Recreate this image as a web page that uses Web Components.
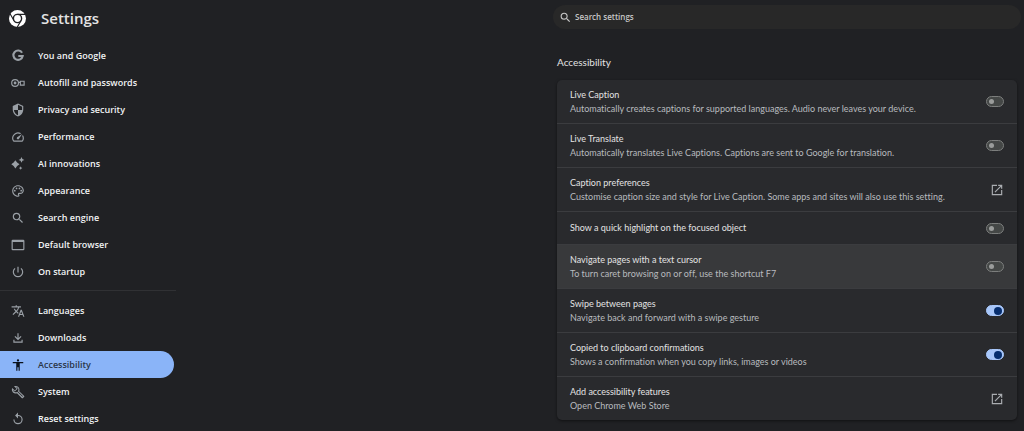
<!DOCTYPE html>
<html lang="en-GB">
<head>
<meta charset="utf-8">
<title>Settings - Accessibility</title>
<style>
  html { background: #202124; }
  body { margin: 0; background: #202124; color: #e3e3e3; font-family: "Open Sans", "Noto Sans", sans-serif; }
</style>
</head>
<body>
<settings-app>
  <settings-brand slot="side">Settings</settings-brand>
  <settings-nav slot="side">
    <nav-item icon="google">You and Google</nav-item>
    <nav-item icon="key">Autofill and passwords</nav-item>
    <nav-item icon="shield">Privacy and security</nav-item>
    <nav-item icon="speed">Performance</nav-item>
    <nav-item icon="sparkle">AI innovations</nav-item>
    <nav-item icon="palette">Appearance</nav-item>
    <nav-item icon="search">Search engine</nav-item>
    <nav-item icon="window">Default browser</nav-item>
    <nav-item icon="power">On startup</nav-item>
    <nav-divider></nav-divider>
    <nav-item icon="translate">Languages</nav-item>
    <nav-item icon="download">Downloads</nav-item>
    <nav-item icon="person" selected>Accessibility</nav-item>
    <nav-item icon="wrench">System</nav-item>
    <nav-item icon="reset">Reset settings</nav-item>
  </settings-nav>
  <search-box label="Search settings"></search-box>
  <settings-card heading="Accessibility">
    <setting-row kind="toggle"><span slot="title">Live Caption</span><span slot="note">Automatically creates captions for supported languages. Audio never leaves your device.</span></setting-row>
    <setting-row kind="toggle"><span slot="title">Live Translate</span><span slot="note">Automatically translates Live Captions. Captions are sent to Google for translation.</span></setting-row>
    <setting-row kind="link"><span slot="title">Caption preferences</span><span slot="note">Customise caption size and style for Live Caption. Some apps and sites will also use this setting.</span></setting-row>
    <setting-row kind="toggle" single><span slot="title">Show a quick highlight on the focused object</span></setting-row>
    <setting-row kind="toggle" active><span slot="title">Navigate pages with a text cursor</span><span slot="note">To turn caret browsing on or off, use the shortcut F7</span></setting-row>
    <setting-row kind="toggle" on><span slot="title">Swipe between pages</span><span slot="note">Navigate back and forward with a swipe gesture</span></setting-row>
    <setting-row kind="toggle" on><span slot="title">Copied to clipboard confirmations</span><span slot="note">Shows a confirmation when you copy links, images or videos</span></setting-row>
    <setting-row kind="link"><span slot="title">Add accessibility features</span><span slot="note">Open Chrome Web Store</span></setting-row>
  </settings-card>
</settings-app>

<script>
const ICONS = {
  google: '<path d="M19 6.500A8 8 0 1 0 20 12H12.500" fill="none" stroke="currentColor" stroke-width="3.600"/>',
  key: '<g fill="none" stroke="currentColor" stroke-width="2"><circle cx="7" cy="12" r="5.800"/><path d="M12.800 11H16M16 9h6.500v6.500H16z"/></g><circle cx="7" cy="12" r="2.400"/>',
  shield: '<path transform="matrix(-1 0 0 1 24 0)" d="M12 1L3 5v6c0 5.550 3.840 10.740 9 12 5.160-1.260 9-6.450 9-12V5l-9-4zm0 10.990h7c-.53 4.120-3.280 7.790-7 8.940V12H5V6.300l7-3.110v8.800z"/>',
  speed: '<path d="M20.380 8.570l-1.230 1.850a8 8 0 0 1-.22 7.580H5.070A8 8 0 0 1 15.580 6.850l1.850-1.230A10 10 0 0 0 3.350 19a2 2 0 0 0 1.720 1h13.850a2 2 0 0 0 1.740-1 10 10 0 0 0-.27-10.440zm-9.790 6.840a2 2 0 0 0 2.830 0l5.660-8.490-8.490 5.660a2 2 0 0 0 0 2.830z"/>',
  sparkle: '<path d="M7.500 5.500l3 4 4 3-4 3-3 4-3-4-4-3 4-3zM18 0l1.600 3.400L23 5l-3.400 1.600L18 10l-1.600-3.400L13 5l3.400-1.600zM16.500 16l1 2 2 1-2 1-1 2-1-2-2-1 2-1z"/>',
  palette: '<path d="M12 22C6.490 22 2 17.510 2 12S6.490 2 12 2s10 4.040 10 9c0 3.310-2.690 6-6 6h-1.770c-.28 0-.5.22-.5.500 0 .12.050.23.130.33.410.47.640 1.060.640 1.670A2.500 2.500 0 0 1 12 22zm0-18c-4.410 0-8 3.590-8 8s3.590 8 8 8c.28 0 .5-.22.500-.5a.54.54 0 0 0-.14-.35c-.41-.46-.63-1.050-.63-1.650a2.500 2.500 0 0 1 2.500-2.500H16c2.210 0 4-1.790 4-4 0-3.860-3.590-7-8-7z"/><circle cx="6.500" cy="11.500" r="1.500"/><circle cx="9.500" cy="7.500" r="1.500"/><circle cx="14.500" cy="7.500" r="1.500"/><circle cx="17.500" cy="11.500" r="1.500"/>',
  search: '<path d="M15.500 14h-.79l-.28-.27A6.470 6.470 0 0 0 16 9.500 6.500 6.500 0 1 0 9.500 16c1.610 0 3.090-.59 4.230-1.570l.27.28v.79l5 4.990L20.490 19l-4.990-5zm-6 0C7.010 14 5 11.990 5 9.500S7.010 5 9.500 5 14 7.010 14 9.500 11.990 14 9.500 14z"/>',
  window: '<path fill-rule="evenodd" d="M3 3h18a2 2 0 0 1 2 2v14a2 2 0 0 1-2 2H3a2 2 0 0 1-2-2V5a2 2 0 0 1 2-2zM3 7v12h18V7z"/>',
  power: '<path d="M13 3h-2v10h2V3zm4.830 2.170l-1.420 1.420A6.920 6.920 0 0 1 19 12a7 7 0 1 1-11.420-5.420L6.170 5.170A8.930 8.930 0 0 0 3 12a9 9 0 0 0 18 0 8.930 8.930 0 0 0-3.170-6.830z"/>',
  translate: '<path d="M12.870 15.070l-2.540-2.510.03-.03A17.520 17.520 0 0 0 14.070 6H17V4h-7V2H8v2H1v1.990h11.170C11.500 7.920 10.440 9.750 9 11.350 8.070 10.320 7.300 9.190 6.690 8h-2c.73 1.630 1.730 3.170 2.980 4.560l-5.090 5.020L4 19l5-5 3.110 3.110.76-2.040zM18.500 10h-2L12 22h2l1.120-3h4.750L21 22h2l-4.500-12zm-2.620 7l1.620-4.330L19.120 17h-3.240z"/>',
  download: '<path d="M11 4h2v8.200l3.600-3.600L18 10l-6 6-6-6 1.400-1.400 3.600 3.600zM4 15h2v3h12v-3h2v5H4z"/>',
  person: '<path d="M12 2a2 2 0 1 1 0 4 2 2 0 0 1 0-4zm9 7h-6v13h-2v-6h-2v6H9V9H3V7h18v2z"/>',
  wrench: '<path fill-rule="evenodd" d="M22.600 19l-8.500-8.500c.9-2.300.4-5-1.500-6.900-2-2-5-2.400-7.400-1.300L9.500 6.600l-3 3L2.100 5.300C.9 7.700 1.400 10.700 3.400 12.700c1.900 1.900 4.600 2.400 6.900 1.500l8.500 8.400c.4.4 1 .4 1.400 0l2.400-2.300c.5-.4.5-1 0-1.300zM19.500 20.300l-8.700-8.800c-2 1.400-4.400 1.300-6-.3-.8-.8-1.200-1.800-1.200-2.800l2.900 2.900 5.100-4.900-2.900-2.900c1 0 2 .4 2.800 1.200 1.700 1.700 1.700 4.200.2 6.100l8.800 8.500z"/>',
  reset: '<path d="M12 5V1L7 6l5 5V7a6 6 0 1 1-6 6H4a8 8 0 1 0 8-8z"/>',
  external: '<path d="M19 19H5V5h7V3H3v18h18v-9h-2v7zM14 3v2h3.590l-9.830 9.830 1.410 1.410L19 6.410V10h2V3h-7z"/>'
};
const icon = name => `<svg viewBox="0 0 24 24" fill="currentColor" aria-hidden="true">${ICONS[name]}</svg>`;

class Base extends HTMLElement {
  connectedCallback() {
    if (!this.shadowRoot) this.attachShadow({ mode: 'open' }).innerHTML = this.render();
  }
}

customElements.define('settings-app', class extends Base {
  render() {
    return `<style>
      :host { display: flex; justify-content: space-between; overflow: hidden; }
      aside { flex: 0 0 176px; }
      main { box-sizing: border-box; flex: 0 1 471px; min-width: 0; padding: 5px 3px 10px 0; }
    </style>
    <aside><slot name="side"></slot></aside><main><slot></slot></main>`;
  }
});

customElements.define('settings-brand', class extends Base {
  render() {
    return `<style>
      :host { display: block; padding: 8px 9px 0; }
      h1 { display: flex; align-items: center; gap: 15px; margin: 0; height: 20px; font-size: 15px; line-height: 20px; font-weight: 600; }
      svg { width: 17px; height: 17px; flex: none; }
    </style>
    <h1><svg viewBox="0 0 24 24" aria-hidden="true">
      <circle cx="12" cy="12" r="12" fill="#fff"/>
      <circle cx="12" cy="12" r="5.800" fill="none" stroke="#202124" stroke-width="2"/>
      <path d="M12 6.200H23M6.980 14.900L1.480 5.370M17.020 14.900L11.520 24.430" stroke="#202124" stroke-width="1.600"/>
    </svg><slot></slot></h1>`;
  }
});

customElements.define('settings-nav', class extends Base {
  render() {
    return `<style>:host { display: block; padding-top: 14px; }</style><nav aria-label="Settings"><slot></slot></nav>`;
  }
});

customElements.define('nav-divider', class extends Base {
  render() {
    return `<style>:host { display: block; padding: 5px 0 6px; } hr { margin: 0; border: 0; border-top: 1px solid #303134; }</style><hr>`;
  }
});

customElements.define('nav-item', class extends Base {
  render() {
    return `<style>
      :host { display: block; padding-right: 2px; }
      a { display: flex; align-items: center; gap: 13px; height: 27px; padding-left: 11px; color: #f1f3f4; font-size: 9px; line-height: 14px; font-weight: 600; text-decoration: none; border-radius: 0 14px 14px 0; }
      svg { width: 14px; height: 14px; flex: none; color: #9aa0a6; }
      :host([selected]) a { background: #8ab4f8; color: #2b3648; }
      :host([selected]) svg { color: #0b111b; }
    </style>
    <a href="#"${this.hasAttribute('selected') ? ' aria-current="page"' : ''}>${icon(this.getAttribute('icon'))}<span><slot></slot></span></a>`;
  }
});

customElements.define('search-box', class extends Base {
  render() {
    const label = this.getAttribute('label');
    return `<style>
      :host { display: block; }
      label { display: flex; align-items: center; gap: 3px; height: 24px; padding: 0 6px; border-radius: 12px; background: #282828; color: #c7c7c7; }
      svg { width: 13px; height: 13px; flex: none; }
      input { flex: 1; min-width: 0; border: 0; padding: 0; background: none; outline: 0; color: inherit; font: 600 8px/14px "Open Sans", "Noto Sans", sans-serif; }
      input::placeholder { color: #c7c7c7; opacity: 1; }
    </style>
    <label>${icon('search')}<input type="search" aria-label="${label}" placeholder="${label}"></label>`;
  }
});

customElements.define('settings-card', class extends Base {
  render() {
    return `<style>
      :host { display: block; padding: 26px 4px 0; }
      h2 { margin: 0 0 11px; font: 400 10px/14px Lato, "Open Sans", sans-serif; }
      section { overflow: hidden; border-radius: 5px; background: #292a2d; box-shadow: 0 1px 3px #00000080; }
    </style>
    <h2>${this.getAttribute('heading')}</h2><section><slot></slot></section>`;
  }
});

customElements.define('setting-row', class extends Base {
  render() {
    const link = this.getAttribute('kind') === 'link';
    const text = `<span class="text"><span class="title"><slot name="title"></slot></span><span class="note"><slot name="note"></slot></span></span>`;
    return `<style>
      :host { display: block; border-bottom: 1px solid #3b3c3f; font: 400 9px/14px Lato, "Open Sans", sans-serif; font-variant-ligatures: none; }
      :host(:last-child) { border-bottom: 0; }
      :host([active]) { background: #38393b; }
      .row { display: flex; align-items: center; justify-content: space-between; gap: 16px; min-height: 43px; padding: 0 13px; color: inherit; text-decoration: none; }
      :host([single]) .row { min-height: 32px; }
      .title, .note { display: block; }
      .title { color: #e3e3e3; }
      .note { color: #b8bbbf; }
      svg { width: 14px; height: 14px; flex: none; color: #aaadb1; }
      input { appearance: none; box-sizing: border-box; display: flex; align-items: center; flex: none; width: 18px; height: 11px; margin: 0; padding: 0 2px; border: 1px solid #7c7e7d; border-radius: 6px; background: #444746; }
      input::before { content: ""; width: 5px; height: 5px; border-radius: 50%; background: #9a9c9b; }
      input:checked { justify-content: flex-end; padding: 0 1px; border-color: #a8c7fa; background: #a8c7fa; }
      input:checked::before { width: 8px; height: 8px; background: #062e6f; }
    </style>` + (link
      ? `<a class="row" href="#">${text}${icon('external')}</a>`
      : `<label class="row">${text}<input type="checkbox" role="switch"${this.hasAttribute('on') ? ' checked' : ''}></label>`);
  }
});
</script>
</body>
</html>
